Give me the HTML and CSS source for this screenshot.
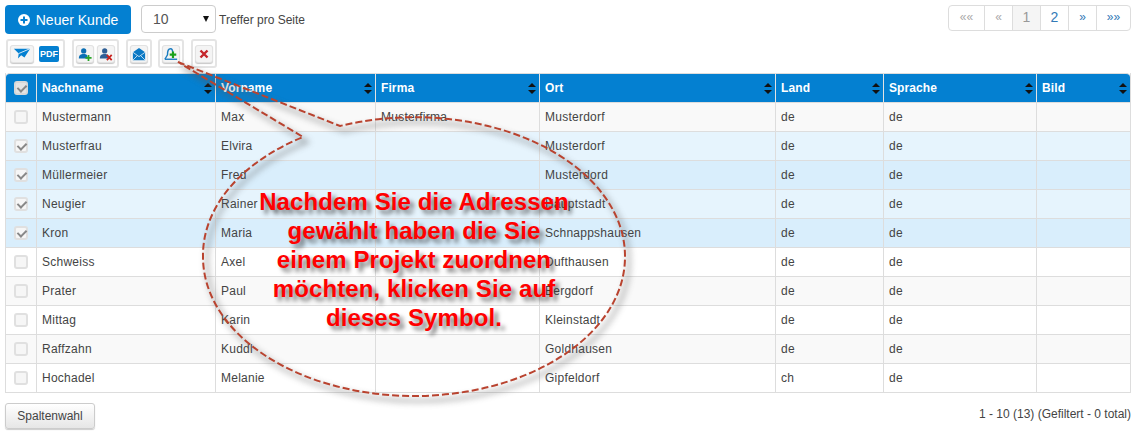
FILE: index.html
```html
<!DOCTYPE html>
<html lang="de">
<head>
<meta charset="utf-8">
<title>Kunden</title>
<link rel="stylesheet" href="styles.css">
</head>
<body>
<div class="page">
  <div class="topbar">
    <button class="btn-new"><svg class="plus" viewBox="0 0 12 12" width="12" height="12"><circle cx="6" cy="6" r="6" fill="#fff"/><path d="M5 2.500h2V5h2.500v2H7v2.500H5V7H2.500V5H5z" fill="#0480d1"/></svg>Neuer Kunde</button>
    <div class="select"><span>10</span><i class="caret"></i></div>
    <span class="perpage">Treffer pro Seite</span>
    <div class="pager">
      <span class="pg dis wide">««</span><span class="pg dis">«</span><span class="pg cur num">1</span><span class="pg num act">2</span><span class="pg act">»</span><span class="pg act wide end">»»</span>
    </div>
  </div>
  <div class="tools">
    <div class="tg first">
      <span class="tb plane"><svg viewBox="0 0 22 16" width="18" height="13"><path d="M1 2h20l-7 11-4-3-4 4 1-6z" fill="#0480d1"/><path d="M21 2L7 8" stroke="#fff" stroke-width="1"/></svg></span>
      <span class="tb pdf">PDF</span>
    </div>
    <div class="tg second">
      <span class="tb"><svg viewBox="0 0 16 16" width="14" height="14"><circle cx="6.500" cy="4.500" r="3" fill="#0a6fb5"/><path d="M1 13c0-4 2-5 5.500-5S11 9 11 13z" fill="#0a6fb5"/><path d="M11 9h2v2.500h2.500v2H13V16h-2v-2.500H8.500v-2H11z" fill="#2aa52a"/></svg></span>
      <span class="tb"><svg viewBox="0 0 16 16" width="14" height="14"><circle cx="6.500" cy="4.500" r="3" fill="#2f5f96"/><path d="M1 13c0-4 2-5 5.500-5S11 9 11 13z" fill="#2f5f96"/><path d="M9 9l5.500 6M14.500 9L9 15" stroke="#c8211d" stroke-width="2"/></svg></span>
    </div>
    <div class="tg">
      <span class="tb"><svg viewBox="0 0 16 16" width="14" height="14"><path d="M1 6l7-5 7 5v9H1z" fill="#0a78c4"/><path d="M1 6l7 5 7-5M1 15l5-5M15 15l-5-5" fill="none" stroke="#cfe6f5" stroke-width="1"/></svg></span>
    </div>
    <div class="tg">
      <span class="tb"><svg viewBox="0 0 16 16" width="14" height="14"><path d="M1 14l3-5c0-5 1-7 3.500-7S10 4 10 7" fill="none" stroke="#1a7cc0" stroke-width="1.600"/><path d="M1 14h14" stroke="#1a7cc0" stroke-width="1.600"/><path d="M9 5h2.500v2.500H14V10h-2.500v2.500H9V10H6.500V7.500H9z" fill="#1ba11b"/></svg></span>
    </div>
    <div class="tg last">
      <span class="tb"><svg viewBox="0 0 16 16" width="14" height="14"><path d="M4 4l8 8M12 4l-8 8" stroke="#c5262c" stroke-width="2.800"/></svg></span>
    </div>
  </div>
  <table class="grid">
    <colgroup><col class="c0"><col class="c1"><col class="c2"><col class="c3"><col class="c4"><col class="c5"><col class="c6"><col class="c7"></colgroup>
    <thead>
      <tr>
        <th class="chk"><span class="cb head on"></span></th>
        <th><span class="hd">Nachname<i class="sort"></i></span></th>
        <th><span class="hd">Vorname<i class="sort"></i></span></th>
        <th><span class="hd">Firma<i class="sort"></i></span></th>
        <th><span class="hd">Ort<i class="sort"></i></span></th>
        <th><span class="hd">Land<i class="sort"></i></span></th>
        <th><span class="hd">Sprache<i class="sort"></i></span></th>
        <th><span class="hd">Bild<i class="sort"></i></span></th>
      </tr>
    </thead>
    <tbody>
      <tr class="odd"><td class="chk"><span class="cb"></span></td><td>Mustermann</td><td>Max</td><td>Musterfirma</td><td>Musterdorf</td><td>de</td><td>de</td><td></td></tr>
      <tr class="sel"><td class="chk"><span class="cb on"></span></td><td>Musterfrau</td><td>Elvira</td><td></td><td>Musterdorf</td><td>de</td><td>de</td><td></td></tr>
      <tr class="sel2"><td class="chk"><span class="cb on"></span></td><td>Müllermeier</td><td>Fred</td><td></td><td>Musterdord</td><td>de</td><td>de</td><td></td></tr>
      <tr class="sel"><td class="chk"><span class="cb on"></span></td><td>Neugier</td><td>Rainer</td><td></td><td>Hauptstadt</td><td>de</td><td>de</td><td></td></tr>
      <tr class="sel2"><td class="chk"><span class="cb on"></span></td><td>Kron</td><td>Maria</td><td></td><td>Schnappshausen</td><td>de</td><td>de</td><td></td></tr>
      <tr><td class="chk"><span class="cb"></span></td><td>Schweiss</td><td>Axel</td><td></td><td>Dufthausen</td><td>de</td><td>de</td><td></td></tr>
      <tr class="odd"><td class="chk"><span class="cb"></span></td><td>Prater</td><td>Paul</td><td></td><td>Bergdorf</td><td>de</td><td>de</td><td></td></tr>
      <tr><td class="chk"><span class="cb"></span></td><td>Mittag</td><td>Karin</td><td></td><td>Kleinstadt</td><td>de</td><td>de</td><td></td></tr>
      <tr class="odd"><td class="chk"><span class="cb"></span></td><td>Raffzahn</td><td>Kuddl</td><td></td><td>Goldhausen</td><td>de</td><td>de</td><td></td></tr>
      <tr><td class="chk"><span class="cb"></span></td><td>Hochadel</td><td>Melanie</td><td></td><td>Gipfeldorf</td><td>ch</td><td>de</td><td></td></tr>
    </tbody>
  </table>
  <div class="foot">
    <button class="btn-col">Spaltenwahl</button>
    <span class="info">1 - 10 (13) (Gefiltert - 0 total)</span>
  </div>
</div>
<svg class="callout" width="1138" height="436" viewBox="0 0 1138 436">
  <defs><filter id="sh" x="-10%" y="-10%" width="125%" height="125%"><feGaussianBlur stdDeviation="3"/></filter></defs>
  <path class="shadow" filter="url(#sh)" d="M178 62L340 126A211 139 0 0 1 625 257A211 139 0 0 1 414 396A211 139 0 0 1 203 257A211 139 0 0 1 303 137Z"/>
  <path class="line" d="M178 62L340 126A211 139 0 0 1 625 257A211 139 0 0 1 414 396A211 139 0 0 1 203 257A211 139 0 0 1 303 137Z"/>
</svg>
<div class="note">Nachdem Sie die Adressen<br>gewählt haben die Sie<br>einem Projekt zuordnen<br>möchten, klicken Sie auf<br>dieses Symbol.</div>
</body>
</html>
```
FILE: styles.css
```css
* { box-sizing: border-box; }
html, body { margin: 0; padding: 0; }
body { width: 1138px; height: 436px; overflow: hidden; background: #fff; font-family: "Liberation Sans", Arial, sans-serif; font-size: 12px; color: #444; position: relative; }
.page { padding: 5px 7px 0 5px; }
.topbar { display: flex; align-items: flex-start; height: 29px; }
.btn-new { width: 126px; height: 29px; border: 0; border-radius: 4px; background: #0480d1; color: #fff; font: 14px "Liberation Sans", Arial, sans-serif; display: flex; align-items: center; justify-content: center; gap: 6px; padding: 0; }
.select { width: 75px; height: 28px; margin-left: 10px; border: 1px solid #ccc; border-radius: 4px; font-size: 14px; color: #555; padding: 5px 11px; position: relative; }
.caret { position: absolute; right: 6px; top: 10px; border: 3.5px solid transparent; border-top: 6px solid #111; border-bottom: 0; }
.perpage { margin: 8px 0 0 3px; color: #444; }
.pager { margin-left: auto; display: flex; height: 26px; border: 1px solid #ddd; border-radius: 4px; }
.pg { width: 28px; display: flex; align-items: center; justify-content: center; border-left: 1px solid #ddd; font-size: 12px; padding-bottom: 2px; }
.pg:first-child { border-left: 0; }
.pg.wide { width: 35px; }
.pg.end { width: 34px; }
.dis { color: #aaa; }
.act { color: #337ab7; }
.num { font-size: 14px; }
.cur { background: #f5f5f5; color: #999; }
.tools { display: flex; margin: 5px 0 0 1px; gap: 6px; height: 29px; }
.tg { display: flex; align-items: center; gap: 5px; padding: 0 3px; border: 2px solid #e4e4e4; border-radius: 3px; height: 29px; }
.tg.first { gap: 6px; padding-right: 4px; margin-right: 1px; }
.tg.second { margin-right: 1px; }
.tg.last { margin-left: 1px; }
.tb { height: 16px; width: 16px; display: flex; align-items: center; justify-content: center; border-radius: 2px; background: #f4f4f4; box-shadow: 0 0 0 1px #e2e2e2, 0 1px 1px 1px #c8c8c8; }
.tb svg { display: block; }
.tb.plane { width: 22px; }
.tb.pdf { background: #0480d1; color: #fff; font-size: 9px; font-weight: bold; width: 20px; box-shadow: none; }
.grid { margin-top: 5px; width: 1126px; table-layout: fixed; border-collapse: separate; border-spacing: 0; border-left: 1px solid #ddd; border-right: 1px solid #ddd; }
.c0 { width: 30px; } .c1 { width: 179px; } .c2 { width: 160px; } .c3 { width: 164px; } .c4 { width: 236px; } .c5 { width: 108px; } .c6 { width: 153px; } .c7 { width: 94px; }
th { height: 29px; background: #0480d1; color: #fff; font-size: 12px; font-weight: bold; text-align: left; padding: 0 0 0 5px; border-left: 1px solid #e3e3e3; border-top: 1px solid #ddd; }
th:first-child { border-left: 0; border-top-left-radius: 4px; }
th:last-child { border-top-right-radius: 4px; }
.hd { display: block; position: relative; letter-spacing: .1px; }
.sort { position: absolute; right: 3px; top: 2px; width: 8px; height: 11px; }
.sort::before, .sort::after { content: ""; position: absolute; left: 0; border: 4px solid transparent; }
.sort::before { top: 0; border-bottom: 4.500px solid #111; border-top: 0; }
.sort::after { bottom: 0; border-top: 4.500px solid #111; border-bottom: 0; }
td { height: 29px; padding: 0 0 0 5px; border-left: 1px solid #ddd; border-top: 1px solid #ddd; color: #444; font-size: 12px; letter-spacing: .25px; }
td:first-child { border-left: 0; }
tbody tr:last-child td { border-bottom: 1px solid #ddd; height: 30px; padding-bottom: 1px; }
tr.odd td { background: #f9f9f9; }
tr.sel td { background: #e6f4fd; }
tr.sel2 td { background: #d9eefc; }
th.chk, td.chk { padding: 0; text-align: center; }
.cb { display: inline-block; width: 14px; height: 14px; border: 2px solid #e0e0e0; border-radius: 3px; background: #f6f6f6; vertical-align: middle; position: relative; }
.cb.head { background: #e4e4e4; border-color: #d8d8d8; }
.cb.on::after { content: ""; position: absolute; left: 3px; top: 0; width: 4px; height: 7px; border: solid #888; border-width: 0 2px 2px 0; transform: rotate(45deg); }
.foot { display: flex; justify-content: space-between; align-items: flex-start; margin-top: 10px; }
.btn-col { width: 90px; height: 26px; border: 1px solid #ccc; border-radius: 3px; background: linear-gradient(#fff, #e6e6e6); color: #444; font: 12px "Liberation Sans", Arial, sans-serif; padding: 0; box-shadow: 0 1px 1px #ccc; }
.info { margin-top: 4px; color: #444; }
.callout { position: absolute; left: 0; top: 0; pointer-events: none; }
.shadow { fill: none; stroke: #555; stroke-width: 3; opacity: .5; transform: translate(4px, 5px); }
.line { fill: none; stroke: #b9432f; stroke-width: 2; stroke-dasharray: 7 3; }
.note { position: absolute; left: 204px; top: 187px; width: 420px; text-align: center; color: #f00; font-size: 24px; font-weight: bold; line-height: 29px; letter-spacing: .1px; text-shadow: 4px 4px 4px rgba(50,50,50,.65); }
```
